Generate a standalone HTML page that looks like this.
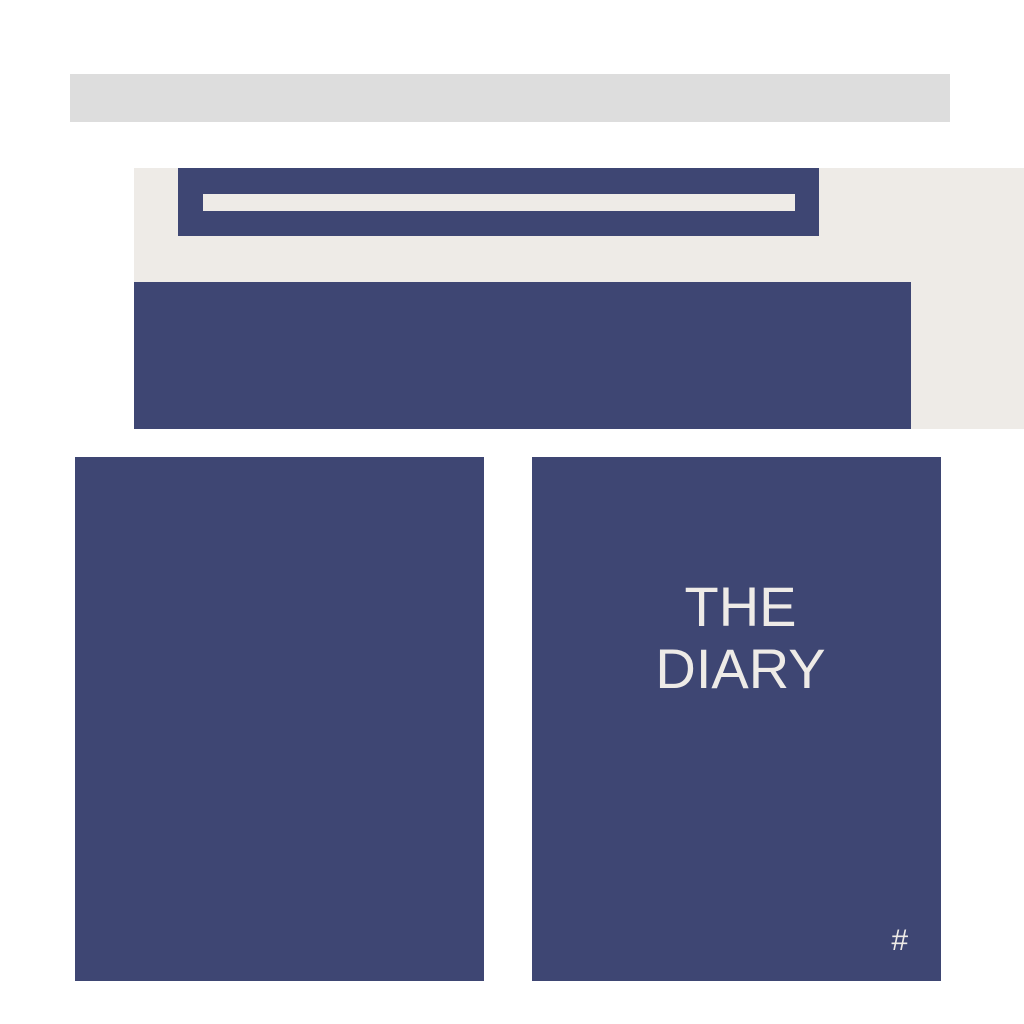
<!DOCTYPE html>
<html><head><style>
body{margin:0;width:1024px;height:1024px;background:#fff;position:relative;overflow:hidden;font-family:"Liberation Sans",sans-serif}
div{position:absolute}
.n{background:#3e4673}
</style></head><body>
<div style="left:70px;top:74px;width:880px;height:48px;background:#dddddd"></div>
<div style="left:134px;top:168px;width:890px;height:261px;background:#eeebe7"></div>
<div class="n" style="left:178px;top:168px;width:641px;height:68px"></div>
<div style="left:203px;top:194px;width:592px;height:17px;background:#eeebe7"></div>
<div class="n" style="left:134px;top:282px;width:777px;height:147px"></div>
<div class="n" style="left:75px;top:457px;width:409px;height:524px"></div>
<div class="n" style="left:532px;top:457px;width:409px;height:524px"></div>
<div style="left:536px;top:576px;width:409px;text-align:center;color:#eeebe7;font-size:56px;line-height:62px;letter-spacing:0px">THE<br>DIARY</div>
<div style="left:891px;top:924px;color:#eeebe7;font-size:30px;font-style:italic">#</div>
</body></html>
